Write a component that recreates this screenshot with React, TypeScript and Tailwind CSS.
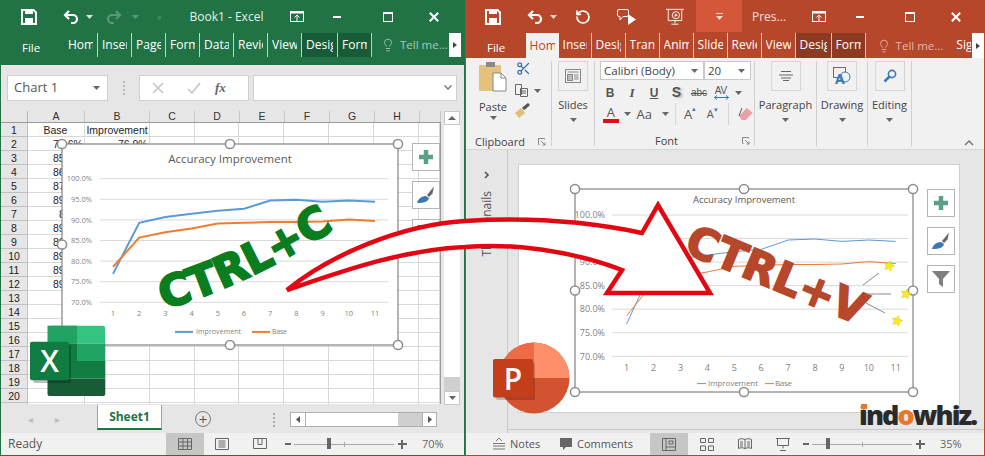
import { Lightbulb, RotateCcw, Scissors } from "lucide-react";

const improvement = [76.9, 89.3, 90.7, 91.5, 92.2, 92.7, 94.7, 94.9, 94.4, 94.7, 94.4];
const base = [78.6, 85.7, 87, 87.9, 89.1, 89.3, 89.5, 89.5, 89.6, 90.1, 89.7];

const excelCols = [
  "w-[57px]",
  "w-[65px]",
  "w-[45px]",
  "w-[45px]",
  "w-[45px]",
  "w-[45px]",
  "w-[45px]",
  "w-[45px]",
  "w-[21px]",
];

const Caret = ({ color = "#666" }: { color?: string }) => (
  <svg width="7" height="4" viewBox="0 0 7 4" className="shrink-0">
    <polygon points="0,0 7,0 3.5,4" fill={color} />
  </svg>
);

const SaveIcon = () => (
  <svg width="16" height="16" viewBox="0 0 16 16">
    <path d="M1 1h11.5L15 3.5V15H1z" fill="none" stroke="#fff" strokeWidth="2" />
    <rect x="4" y="1" width="8" height="4" fill="#fff" />
    <rect x="4" y="9" width="8" height="6" fill="#fff" />
  </svg>
);

const UndoIcon = ({ color = "#fff", flip = false }: { color?: string; flip?: boolean }) => (
  <svg width="16" height="14" viewBox="0 0 16 14" className={flip ? "-scale-x-100" : ""}>
    <path d="M6 1L2 5l4 4M2.5 5H10a3.5 3.5 0 0 1 0 8H8" fill="none" stroke={color} strokeWidth="2.2" />
  </svg>
);

const DisplayIcon = () => (
  <svg width="14" height="12" viewBox="0 0 14 12">
    <rect x="0.5" y="0.5" width="13" height="10" fill="none" stroke="#fff" />
    <rect x="0.5" y="0.5" width="13" height="2" fill="#fff" />
    <path d="M7 10V4.5M4.5 6.5L7 4l2.5 2.5" fill="none" stroke="#fff" />
  </svg>
);

const MaxIcon = () => (
  <svg width="10" height="10" viewBox="0 0 10 10">
    <rect x="0.5" y="0.5" width="9" height="9" fill="none" stroke="#fff" />
    <rect x="0" y="0" width="10" height="2" fill="#fff" />
  </svg>
);

const CloseIcon = () => (
  <svg width="10" height="10" viewBox="0 0 10 10">
    <path d="M0.8 0.8l8.4 8.4M9.2 0.8L0.8 9.2" stroke="#fff" strokeWidth="2" />
  </svg>
);

const MinIcon = () => <div className="h-[2px] w-[8px] bg-white" />;

const RibbonTab = ({ label, className }: { label: string; className: string }) => (
  <div className={`h-full border-r border-white/70 pl-[4px] pr-[4px] leading-[23px] ${className}`}>
    <div className="overflow-hidden whitespace-nowrap">{label}</div>
  </div>
);

const ExcelHeader = () => (
  <div className="flex h-[65px] flex-col bg-[#217346] text-[12px] text-white">
    <div className="flex h-[33px] items-center">
      <div className="ml-[20px] flex w-[16px] justify-center"><SaveIcon /></div>
      <div className="ml-[26px] flex w-[16px] justify-center"><UndoIcon /></div>
      <div className="ml-[7px]"><Caret color="#d6e6dc" /></div>
      <div className="ml-[13px]"><UndoIcon color="#5a9a76" flip /></div>
      <div className="ml-[10px]"><Caret color="#5a9a76" /></div>
      <div className="ml-[18px] text-[9px] text-[#5a9a76]">»</div>
      <div className="ml-[25px] w-[80px] text-center text-[12px] text-[#e6f0ea]">Book1 - Excel</div>
      <div className="ml-[24px]"><DisplayIcon /></div>
      <div className="ml-[29px]"><MinIcon /></div>
      <div className="ml-[42px]"><MaxIcon /></div>
      <div className="ml-[36px]"><CloseIcon /></div>
    </div>
    <div className="flex h-[24px] items-stretch">
      <div className="w-[63px] pl-[21px] pt-[3px] text-[11.5px] leading-[23px]">File</div>
      <RibbonTab label="Home" className="w-[34px]" />
      <RibbonTab label="Insert" className="w-[34px]" />
      <RibbonTab label="Page Layout" className="w-[34px]" />
      <RibbonTab label="Formulas" className="w-[34px]" />
      <RibbonTab label="Data" className="w-[34px]" />
      <RibbonTab label="Review" className="w-[34px]" />
      <RibbonTab label="View" className="w-[34px]" />
      <RibbonTab label="Design" className="w-[36px] bg-[#185c37]" />
      <RibbonTab label="Format" className="w-[34px] bg-[#185c37]" />
      <div className="ml-[9px] flex items-center text-[11.5px] text-[#a9c9b6]">
        <Lightbulb size={14} strokeWidth={1.5} />
        <span className="ml-[5px] whitespace-nowrap">Tell me...</span>
      </div>
      <div className="ml-auto mr-[3px] flex w-[12px] items-center justify-center bg-white">
        <svg width="4" height="6" viewBox="0 0 4 6"><polygon points="0,0 4,3 0,6" fill="#444" /></svg>
      </div>
    </div>
  </div>
);

const FormulaBar = () => (
  <div className="flex h-[47px] items-center bg-[#e6e6e6] pl-[6px] pr-[7px]">
    <div className="flex h-[26px] w-[101px] items-center justify-between border border-[#d0d0d0] bg-white pl-[6px] pr-[7px] text-[13px] text-[#555]">
      Chart 1
      <Caret />
    </div>
    <div className="ml-[15px] flex w-[2px] flex-col gap-[2px]">
      <div className="h-[2px] bg-[#bbb]" />
      <div className="h-[2px] bg-[#bbb]" />
      <div className="h-[2px] bg-[#bbb]" />
      <div className="h-[2px] bg-[#bbb]" />
    </div>
    <div className="ml-[14px] flex h-[26px] w-[110px] items-center border border-[#d0d0d0] bg-white">
      <svg width="12" height="12" viewBox="0 0 12 12" className="ml-[12px]">
        <path d="M1 1l10 10M11 1L1 11" stroke="#c4c4c4" strokeWidth="1.5" />
      </svg>
      <svg width="14" height="12" viewBox="0 0 14 12" className="ml-[23px]">
        <path d="M1 7l4 4 8-10" fill="none" stroke="#c4c4c4" strokeWidth="1.5" />
      </svg>
      <span className="ml-[14px] font-['Liberation_Serif',serif] text-[13px] font-bold italic text-[#666]">fx</span>
    </div>
    <div className="ml-[4px] flex h-[26px] flex-1 items-center justify-end border border-[#d0d0d0] bg-white pr-[4px]">
      <svg width="8" height="5" viewBox="0 0 8 5"><path d="M0.5 0.5l3.5 3.5 3.5-3.5" fill="none" stroke="#777" strokeWidth="1.5" /></svg>
    </div>
  </div>
);

const cellValues: Record<number, [string, string]> = {
  1: ["Base", "Improvement"],
  2: ["78.6%", "76.9%"],
  3: ["85.7%", "89.3%"],
  4: ["86.9%", "90.7%"],
  5: ["87.9%", "91.5%"],
  6: ["89.1%", "92.2%"],
  7: ["8.3%", "92.7%"],
  8: ["89.5%", "94.7%"],
  9: ["89.5%", "94.9%"],
  10: ["89.6%", "94.4%"],
  11: ["89.1%", "94.7%"],
  12: ["89.7%", "94.4%"],
};

const SheetGrid = () => {
  const rows = Array.from({ length: 21 }, (_, i) => i + 1);
  return (
    <div className="w-[440px] overflow-hidden font-['Liberation_Sans',sans-serif] text-[10.5px] text-[#222]">
      <div className="flex h-[11px] bg-[#e6e6e6] leading-[10px] text-[#333]">
        <div className="w-[27px] border-r border-[#b8b8b8]" />
        {["A", "B", "C", "D", "E", "F", "G", "H", ""].map((c, i) => (
          <div key={i} className={`${excelCols[i]} border-r border-[#c8c8c8] text-center`}>{c}</div>
        ))}
      </div>
      <div className="h-[282px] overflow-hidden border-r border-t border-[#9a9a9a] bg-white">
        {rows.map((r) => (
          <div key={r} className="flex h-[14px] leading-[15px]">
            <div className="w-[27px] overflow-hidden border-b border-r border-[#c0c0c0] bg-[#e6e6e6] text-center">{r <= 20 ? r : ""}</div>
            {excelCols.map((w, i) => {
              const v = cellValues[r]?.[i];
              return (
                <div
                  key={i}
                  className={`${w} overflow-hidden whitespace-nowrap border-b border-r border-[#d8d8d8] pr-[1px] ${r === 1 && i === 0 ? "text-center" : "text-right"}`}
                >
                  {v}
                </div>
              );
            })}
          </div>
        ))}
      </div>
    </div>
  );
};

const VerticalScroll = () => (
  <div className="ml-[3px] flex h-[294px] w-[16px] flex-col bg-[#cfcfcf]">
    <div className="flex h-[14px] items-center justify-center border border-[#c8c8c8] bg-white">
      <svg width="8" height="4" viewBox="0 0 8 4"><polygon points="0,4 8,4 4,0" fill="#666" /></svg>
    </div>
    <div className="h-[252px] bg-white" />
    <div className="flex-1" />
    <div className="flex h-[14px] items-center justify-center border border-[#c8c8c8] bg-white">
      <Caret />
    </div>
  </div>
);

const SheetTabs = () => (
  <div className="flex h-[28px] items-start bg-[#e6e6e6]">
    <div className="ml-[27px] mt-[8px] text-[10px] leading-[12px] text-[#bdbdbd]">◂</div>
    <div className="ml-[22px] mt-[8px] text-[10px] leading-[12px] text-[#bdbdbd]">▸</div>
    <div className="ml-[37px] flex h-[25px] w-[65px] items-center justify-center border-b-2 border-x border-x-[#a0a0a0] border-b-[#217346] bg-white text-[12px] font-bold text-[#217346]">
      Sheet1
    </div>
    <div className="ml-[33px] mt-[6px] flex h-[16px] w-[16px] items-center justify-center rounded-full border border-[#777] text-[15px] leading-[14px] text-[#555]">+</div>
    <div className="ml-[62px] mt-[8px] flex w-[2px] flex-col gap-[2px]">
      <div className="h-[2px] bg-[#aaa]" />
      <div className="h-[2px] bg-[#aaa]" />
      <div className="h-[2px] bg-[#aaa]" />
      <div className="h-[2px] bg-[#aaa]" />
    </div>
    <div className="ml-[15px] mt-[7px] flex h-[15px] w-[147px] border border-[#b0b0b0] bg-[#cfcfcf]">
      <div className="flex w-[15px] items-center justify-center border-r border-[#b0b0b0] bg-white">
        <svg width="4" height="7" viewBox="0 0 4 7"><polygon points="4,0 0,3.5 4,7" fill="#555" /></svg>
      </div>
      <div className="w-[92px] bg-white" />
      <div className="flex-1" />
      <div className="flex w-[14px] items-center justify-center border-l border-[#b0b0b0] bg-white">
        <svg width="4" height="7" viewBox="0 0 4 7"><polygon points="0,0 4,3.5 0,7" fill="#555" /></svg>
      </div>
    </div>
  </div>
);

const ZoomSlider = ({ percent, thumb }: { percent: string; thumb: string }) => (
  <div className="flex items-center text-[#666]">
    <div className="h-[2px] w-[6px] bg-[#666]" />
    <div className="relative ml-[3px] h-[1px] w-[100px] bg-[#a8a8a8]">
      <div className={`absolute top-[-6px] h-[11px] w-[4px] bg-[#666] ${thumb}`} />
      <div className="absolute left-[50px] top-[-2px] h-[5px] w-[1px] bg-[#a8a8a8]" />
    </div>
    <div className="relative ml-[4px] h-[9px] w-[9px]">
      <div className="absolute left-0 top-[3px] h-[2px] w-[9px] bg-[#666]" />
      <div className="absolute left-[3px] top-0 h-[9px] w-[2px] bg-[#666]" />
    </div>
    <div className="ml-[15px] text-[11px]">{percent}</div>
  </div>
);

const NormalView = () => (
  <svg width="14" height="12" viewBox="0 0 14 12" fill="none" stroke="#666">
    <path d="M.5.5h13v11H.5zM5 .5v11M9.5.5v11M.5 4h13M.5 8h13" />
  </svg>
);

const ExcelStatus = () => (
  <div className="flex h-[22px] items-center bg-[#f1f1f1] text-[12px] text-[#555]">
    <div className="w-[165px] pl-[7px]">Ready</div>
    <div className="flex h-full w-[38px] items-center justify-center bg-[#c6c6c6]"><NormalView /></div>
    <svg width="14" height="12" viewBox="0 0 14 12" fill="none" stroke="#666" className="ml-[11px]">
      <path d="M.5.5h13v11H.5zM3.500 3h7M3.500 5h7M3.500 7h7M3.500 9h7" />
    </svg>
    <svg width="14" height="12" viewBox="0 0 14 12" fill="none" stroke="#666" className="ml-[24px]">
      <path d="M.5.5h13v10H.5zM5 .5v6h4v-6" />
    </svg>
    <div className="ml-[18px]"><ZoomSlider percent="70%" thumb="left-[33px]" /></div>
  </div>
);

const ExcelPane = () => (
  <div className="flex w-[465px] flex-col border-x border-b border-[#217346]">
    <ExcelHeader />
    <FormulaBar />
    <div className="flex bg-[#e6e6e6]">
      <SheetGrid />
      <VerticalScroll />
      <div className="flex-1" />
    </div>
    <SheetTabs />
    <ExcelStatus />
  </div>
);

const PptHeader = () => (
  <div className="flex h-[58px] flex-col bg-[#b7472a] text-[12px] text-white">
    <div className="flex h-[33px] items-center">
      <div className="ml-[19px]"><SaveIcon /></div>
      <div className="ml-[26px]"><UndoIcon /></div>
      <div className="ml-[7px]"><Caret color="#f3d9d0" /></div>
      <RotateCcw size={16} strokeWidth={2.6} className="ml-[18px]" />
      <svg width="20" height="18" viewBox="0 0 20 18" className="ml-[26px]">
        <path d="M2 1.500h8a1.500 1.500 0 0 1 1.500 1.500v4a1.500 1.500 0 0 1-1.500 1.500H6L3 12V8.500H2A1.500 1.500 0 0 1 .5 7V3A1.500 1.500 0 0 1 2 1.500z" fill="none" stroke="#fff" />
        <polygon points="11,6 19,11.500 11,17" fill="#fff" />
      </svg>
      <svg width="18" height="18" viewBox="0 0 20 20" fill="none" stroke="#fff" className="ml-[29px]">
        <path d="M0 1.500h20M2.500 1.500V14h15V1.500M10 14v3M6 18h8" />
        <circle cx="11" cy="8" r="4" />
        <polygon points="9.800,6 13,8 9.800,10" fill="#fff" stroke="none" />
      </svg>
      <div className="ml-[12px] flex h-[32px] w-[46px] items-center justify-center self-start bg-[#d4573a]">
        <svg width="7" height="7" viewBox="0 0 7 7" fill="#f3d9d0">
          <rect width="7" height="1" />
          <polygon points="0,3 7,3 3.500,7" />
        </svg>
      </div>
      <div className="ml-[10px] w-[36px] text-[12px] text-[#f3e0da]">Pres...</div>
      <div className="ml-[24px]"><DisplayIcon /></div>
      <div className="ml-[30px]"><MinIcon /></div>
      <div className="ml-[41px]"><MaxIcon /></div>
      <div className="ml-[36px]"><CloseIcon /></div>
    </div>
    <div className="flex h-[25px] items-stretch">
      <div className="w-[63px] pl-[21px] pt-[3px] text-[11.5px] leading-[23px]">File</div>
      <div className="w-[33px] bg-[#f1f1f1] pl-[4px] pr-[4px] pt-[1px] leading-[23px] text-[#b7472a]">
        <div className="overflow-hidden whitespace-nowrap">Home</div>
      </div>
      <RibbonTab label="Insert" className="w-[33px]" />
      <RibbonTab label="Design" className="w-[34px]" />
      <RibbonTab label="Transitions" className="w-[34px]" />
      <RibbonTab label="Animations" className="w-[34px]" />
      <RibbonTab label="Slide Show" className="w-[34px]" />
      <RibbonTab label="Review" className="w-[34px]" />
      <RibbonTab label="View" className="w-[34px]" />
      <RibbonTab label="Design" className="w-[36px] bg-[#8e3a22]" />
      <RibbonTab label="Format" className="w-[34px] bg-[#8e3a22]" />
      <div className="ml-[11px] flex items-center text-[11.5px] text-[#e3b8aa]">
        <Lightbulb size={14} strokeWidth={1.5} />
        <span className="ml-[5px] whitespace-nowrap">Tell me...</span>
      </div>
      <div className="ml-[13px] w-[16px] overflow-hidden whitespace-nowrap leading-[23px]">Sign in</div>
      <div className="ml-[1px] flex w-[13px] items-center justify-center bg-white">
        <svg width="4" height="6" viewBox="0 0 4 6"><polygon points="0,0 4,3 0,6" fill="#444" /></svg>
      </div>
    </div>
  </div>
);

const GroupBox = ({ label, children, className }: { label: string; children: React.ReactNode; className: string }) => (
  <div className={`my-[3px] flex flex-col items-center border-r border-[#d0d0d0] ${className}`}>
    <div className="flex h-[30px] w-[30px] items-center justify-center border border-[#d4d4d4]">{children}</div>
    <div className="mt-[6px] whitespace-nowrap leading-[16px]">{label}</div>
    <div className="mt-[5px]"><Caret /></div>
  </div>
);

const Launcher = () => (
  <svg width="8" height="8" viewBox="0 0 8 8" fill="none" stroke="#888">
    <path d="M.5 .5h6v1M.5.500v6h1M3 3l4 4M7 4.500V7H4.500" />
  </svg>
);

const FontGroup = () => (
  <div className="my-[3px] flex w-[160px] flex-col border-r border-[#d0d0d0]">
    <div className="ml-[5px] flex h-[23px] w-[151px] border border-[#c8c8c8] bg-white text-[11.5px]">
      <div className="flex w-[104px] items-center justify-between border-r-2 border-[#c8c8c8] pl-[3px] pr-[5px]">
        Calibri (Body)
        <Caret />
      </div>
      <div className="flex flex-1 items-center justify-between pl-[3px] pr-[5px]">
        20
        <Caret />
      </div>
    </div>
    <div className="ml-[4px] mt-[2px] flex h-[22px] items-center font-['Liberation_Sans',sans-serif] text-[#555]">
      <div className="w-[22px] text-center text-[12px] font-bold">B</div>
      <div className="w-[22px] text-center font-['Liberation_Serif',serif] text-[13px] font-bold italic">I</div>
      <div className="w-[22px] text-center text-[12px] font-bold underline">U</div>
      <div className="w-[23px] text-center text-[14px] font-bold [text-shadow:2px_1px_2px_#bbb]">S</div>
      <div className="w-[22px] text-center text-[10px] line-through">abc</div>
      <div className="flex w-[22px] flex-col items-center text-[10px] leading-[9px]">
        AV
        <svg width="15" height="5" viewBox="0 0 15 5"><path d="M0 2.500h15M3 .5L.5 2.500 3 4.500M12 .5l2.500 2L12 4.500" fill="none" stroke="#3c78b4" /></svg>
      </div>
      <div className="ml-[3px]"><Caret /></div>
    </div>
    <div className="ml-[5px] flex h-[22px] items-center text-[#555]">
      <div className="flex w-[22px] flex-col items-center text-[13px] leading-[13px]">
        A
        <div className="h-[4px] w-[16px] bg-[#e01010]" />
      </div>
      <div className="ml-[2px]"><Caret /></div>
      <div className="ml-[6px] w-[24px] text-[13px]">Aa</div>
      <div className="ml-[2px]"><Caret /></div>
      <div className="ml-[6px] h-[22px] w-px bg-[#d4d4d4]" />
      <div className="ml-[8px] flex w-[16px] text-[13px]">A<span className="text-[7px] leading-[8px] text-[#3c78b4]">▴</span></div>
      <div className="ml-[7px] flex w-[16px] text-[11px]">A<span className="text-[7px] leading-[8px] text-[#3c78b4]">▾</span></div>
      <div className="ml-[6px] h-[22px] w-px bg-[#d4d4d4]" />
      <svg width="16" height="14" viewBox="0 0 16 14" className="ml-[9px]">
        <polygon points="1,9 9,1 15,6 8,13 4,13" fill="#e9a0a8" />
        <path d="M1 9 L4 1" stroke="#555" />
      </svg>
    </div>
    <div className="mt-[9px] flex flex-1 items-center pl-[60px] pr-[4px] leading-[14px]">
      Font
      <div className="ml-auto"><Launcher /></div>
    </div>
  </div>
);

const Ribbon = () => (
  <div className="relative flex h-[92px] border-b border-[#d6d6d6] bg-[#f1f1f1] text-[11px] text-[#444]">
    <div className="my-[3px] flex w-[86px] flex-col border-r border-[#d0d0d0]">
      <div className="flex h-[67px] shrink-0">
        <div className="ml-[12px] flex w-[30px] flex-col items-center">
          <svg width="30" height="30" viewBox="0 0 30 30" className="mt-[1px]">
            <rect x="1" y="3" width="22" height="26" rx="1" fill="#e4c17c" />
            <rect x="8" y="0" width="9" height="5" fill="#8a8a8a" />
            <path d="M15 11h8l5 5v13H15z" fill="#fff" stroke="#888" />
            <path d="M23 11v5h5" fill="none" stroke="#888" />
          </svg>
          <div className="mt-[7px] leading-[15px]">Paste</div>
          <div className="mt-[2px]"><Caret /></div>
        </div>
        <div className="ml-[6px] flex flex-col items-start">
          <Scissors size={15} className="ml-[2px] text-[#3a6ea5]" />
          <div className="mt-[7px] flex items-center">
            <svg width="15" height="15" viewBox="0 0 15 15" fill="#f1f1f1" stroke="#666">
              <path d="M1.500 1.500h6v10h-6zM6.500 5.500h7v8h-7zM8 8h4M8 10h4" />
            </svg>
            <div className="ml-[5px]"><Caret /></div>
          </div>
          <svg width="17" height="15" viewBox="0 0 17 15" className="mt-[5px]">
            <polygon points="1,10 7,5 11,10 5,15" fill="#e0bd78" />
            <path d="M9 6l6-5" stroke="#555" strokeWidth="3" />
          </svg>
        </div>
      </div>
      <div className="mt-[7px] flex items-center pl-[9px] pr-[5px] leading-[14px]">
        Clipboard
        <div className="ml-auto"><Launcher /></div>
      </div>
    </div>
    <GroupBox label="Slides" className="w-[43px]">
      <svg width="16" height="14" viewBox="0 0 16 14" fill="none" stroke="#888">
        <rect x="0.5" y="0.5" width="15" height="13" />
        <path d="M2.500 3h11" />
        <rect x="2.500" y="5.500" width="5" height="6" fill="#bbb" />
        <path d="M9 6h4.500M9 8h4.500M9 10h4.500" />
      </svg>
    </GroupBox>
    <FontGroup />
    <GroupBox label="Paragraph" className="w-[62px]">
      <svg width="14" height="10" viewBox="0 0 14 10" stroke="#666">
        <path d="M2 .5h10M0 4h14M2 7h10M4 9.500h6" />
      </svg>
    </GroupBox>
    <GroupBox label="Drawing" className="w-[51px]">
      <svg width="20" height="20" viewBox="0 0 20 20" fill="none" stroke="#3c78b4">
        <rect x="1.500" y="1.500" width="12" height="10" />
        <circle cx="13" cy="11" r="5" fill="#f1f1f1" />
        <text x="3" y="18" fontSize="14" fontWeight="700" fill="#3c78b4" stroke="none">A</text>
      </svg>
    </GroupBox>
    <GroupBox label="Editing" className="w-[44px]">
      <svg width="14" height="14" viewBox="0 0 14 14" fill="none" stroke="#3c78b4" strokeWidth="1.6">
        <circle cx="9" cy="5" r="3.600" />
        <path d="M6.500 7.500L1.500 12.500" strokeWidth="2.5" />
      </svg>
    </GroupBox>
    <svg width="10" height="6" viewBox="0 0 10 6" className="absolute right-[10px] top-[82px]">
      <path d="M1 5l4-4 4 4" fill="none" stroke="#777" strokeWidth="1.5" />
    </svg>
  </div>
);

const Editor = () => (
  <div className="flex h-[283px] bg-[#e6e6e6]">
    <div className="flex w-[42px] flex-col items-center border-r border-[#c8c8c8]">
      <svg width="6" height="8" viewBox="0 0 6 8" className="mt-[21px]">
        <path d="M1 1l3 3-3 3" fill="none" stroke="#555" strokeWidth="1.6" />
      </svg>
      <div className="mt-[12px] rotate-180 text-[12px] text-[#555] [writing-mode:vertical-rl]">Thumbnails</div>
    </div>
    <div className="flex-1 pb-[3px]">
      <div className="h-full border-b border-[#c8c8c8] pl-[10px] pt-[14px]">
        <div className="h-[249px] w-[442px] border border-[#cfcfcf] bg-white" />
      </div>
    </div>
  </div>
);

const PptStatus = () => (
  <div className="flex h-[22px] items-center bg-[#f1f1f1] text-[11px] text-[#555]">
    <svg width="12" height="12" viewBox="0 0 12 12" stroke="#777" className="ml-[27px]">
      <path d="M0 5.500h12M0 8h12M0 11h12M3 3l3-3 3 3" fill="none" />
    </svg>
    <div className="ml-[5px] w-[29px]">Notes</div>
    <svg width="13" height="13" viewBox="0 0 13 13" className="ml-[21px]">
      <path d="M0 0h12v9H6l-3 3V9H0z" fill="#666" />
    </svg>
    <div className="ml-[4px] w-[61px]">Comments</div>
    <div className="ml-[12px] flex h-full w-[38px] items-center justify-center bg-[#c6c6c6]">
      <svg width="14" height="13" viewBox="0 0 14 13" fill="none" stroke="#666">
        <path d="M.5.500h13v12H.5zM4 .5v12M4 9h9.500M7 3h4v3H7z" />
      </svg>
    </div>
    <svg width="14" height="13" viewBox="0 0 14 13" fill="none" stroke="#666" className="ml-[12px]">
      <path d="M.5.500h5v4h-5zM8.500.5h5v4h-5zM.5 8h5v4.500h-5zM8.500 8h5v4.500h-5z" />
    </svg>
    <svg width="14" height="13" viewBox="0 0 14 13" fill="none" stroke="#666" className="ml-[24px]">
      <path d="M.5 1.500c2-1 4-1 6.500 0 2.500-1 4.500-1 6.500 0v9c-2-1-4-1-6.500 0-2.500-1-4.500-1-6.500 0zM7 1.500v9M2 4h3M2 6h3M2 8h3M9 4h3M9 6h3M9 8h3" />
    </svg>
    <svg width="14" height="13" viewBox="0 0 14 13" fill="none" stroke="#666" className="ml-[24px]">
      <path d="M0 .5h14M1.500 .5v7h11v-7M7 7.500v3M4 12.500h6" />
    </svg>
    <div className="ml-[13px]"><ZoomSlider percent="35%" thumb="left-[14px]" /></div>
  </div>
);

const PptPane = () => (
  <div className="flex w-[520px] flex-col border-x border-b border-[#b7472a]">
    <PptHeader />
    <Ribbon />
    <Editor />
    <PptStatus />
  </div>
);

type ChartProps = {
  className: string;
  box: [number, number, number, number];
  gridX: [number, number];
  y100: number;
  y70: number;
  firstX: number;
  stepX: number;
  labelX: number;
  tickY: number;
  titleY: number;
  titleSize: number;
  axisSize: number;
  lineWidth: number;
  legendY: number;
  legend: [number, number, number, number, number, number];
  legendSize: number;
  legendWidths: [number, number];
};

const Chart = ({ className, box, gridX, y100, y70, firstX, stepX, labelX, tickY, titleY, titleSize, axisSize, lineWidth, legendY, legend, legendSize, legendWidths }: ChartProps) => {
  const [l, t, r, b] = box;
  const yOf = (v: number) => y100 + ((100 - v) * (y70 - y100)) / 30;
  const xOf = (i: number) => firstX + i * stepX;
  const pts = (data: number[]) => data.map((v, i) => `${xOf(i).toFixed(1)},${yOf(v).toFixed(1)}`).join(" ");
  const midX = (l + r) / 2;
  const midY = (t + b) / 2;
  const ticks = [100, 95, 90, 85, 80, 75, 70];
  const handles = [[l, t], [midX, t], [r, t], [l, midY], [r, midY], [l, b], [midX, b], [r, b]];
  return (
    <svg className={`absolute overflow-visible ${className}`} viewBox={`${l} ${t} ${r - l} ${b - t}`}>
      <rect x={l} y={t} width={r - l} height={b - t} fill="#fff" stroke="#8c8c8c" strokeWidth="1.3" />
      <text x={midX} y={titleY} textAnchor="middle" fontSize={titleSize} fill="#595959" fontFamily="'Open Sans', sans-serif">
        Accuracy Improvement
      </text>
      {ticks.map((v) => (
        <g key={v}>
          <line x1={gridX[0]} x2={gridX[1]} y1={yOf(v)} y2={yOf(v)} stroke="#d9d9d9" />
          <text x={labelX} y={yOf(v) + axisSize * 0.36} textAnchor="end" fontSize={axisSize} fill="#7f7f7f" fontFamily="'Open Sans', sans-serif">
            {v.toFixed(1)}%
          </text>
        </g>
      ))}
      {improvement.map((_, i) => (
        <text key={i} x={xOf(i)} y={tickY} textAnchor="middle" fontSize={axisSize} fill="#7f7f7f" fontFamily="'Open Sans', sans-serif">
          {i + 1}
        </text>
      ))}
      <polyline points={pts(improvement)} fill="none" stroke="#5b9bd5" strokeWidth={lineWidth} />
      <polyline points={pts(base)} fill="none" stroke="#ed7d31" strokeWidth={lineWidth} />
      <line x1={legend[0]} x2={legend[1]} y1={legendY - legendSize * 0.3} y2={legendY - legendSize * 0.3} stroke="#5b9bd5" strokeWidth={lineWidth} />
      <text x={legend[2]} y={legendY} fontSize={legendSize} fill="#7f7f7f" textLength={legendWidths[0]} fontFamily="'Open Sans', sans-serif">Improvement</text>
      <line x1={legend[3]} x2={legend[4]} y1={legendY - legendSize * 0.3} y2={legendY - legendSize * 0.3} stroke="#ed7d31" strokeWidth={lineWidth} />
      <text x={legend[5]} y={legendY} fontSize={legendSize} fill="#7f7f7f" textLength={legendWidths[1]} fontFamily="'Open Sans', sans-serif">Base</text>
      {handles.map(([x, y], i) => (
        <circle key={i} cx={x} cy={y} r="4.6" fill="#fff" stroke="#8c8c8c" strokeWidth="1.5" />
      ))}
    </svg>
  );
};

const SideButton = ({ className, kind }: { className: string; kind: "plus" | "brush" | "filter" }) => (
  <div className={`absolute flex h-[28px] w-[28px] items-center justify-center border border-[#b4b4b4] bg-white ${className}`}>
    {kind === "plus" && (
      <svg width="16" height="16" viewBox="0 0 16 16"><path d="M8 1v14M1 8h14" stroke="#5b9e8a" strokeWidth="4.5" /></svg>
    )}
    {kind === "brush" && (
      <svg width="20" height="20" viewBox="0 0 20 20">
        <path d="M11 10l7-8.500-1.500 7-3.500 3.500z" fill="#666" />
        <path d="M1 18c1-3.500 3-6.500 9-7l3 2c-.5 3-4 5-12 5z" fill="#3c78b4" />
      </svg>
    )}
    {kind === "filter" && (
      <svg width="18" height="18" viewBox="0 0 18 18">
        <polygon points="0,1 18,1 11,9 11,17 7,14 7,9" fill="#7f7f7f" />
      </svg>
    )}
  </div>
);

const star = (cx: number, cy: number) => {
  const points: string[] = [];
  for (let i = 0; i < 10; i++) {
    const rad = i % 2 === 0 ? 5.5 : 2.6;
    const a = -Math.PI / 2 + 0.25 + (i * Math.PI) / 5;
    points.push(`${(cx + rad * Math.cos(a)).toFixed(1)},${(cy + rad * Math.sin(a)).toFixed(1)}`);
  }
  return points.join(" ");
};

const Overlay = () => (
  <svg className="pointer-events-none absolute left-0 top-0 h-[456px] w-[985px]" viewBox="0 0 985 456">
    <defs>
      <path id="ctrlc" d="M164 309 Q 250 285 342 224" />
      <path id="ctrlv" d="M683 252 Q 770 288 868 329" />
    </defs>
    {/* excel logo */}
    <path d="M51 325.700h52a2 2 0 0 1 2 2V343H77z" fill="#33c481" />
    <rect x="47.500" y="325.700" width="29.500" height="17.600" fill="#21a366" />
    <rect x="47.500" y="343.300" width="29.500" height="17.700" fill="#107c41" />
    <rect x="77" y="343.300" width="28.300" height="17.700" fill="#21a366" />
    <rect x="47.500" y="361" width="57.800" height="17.700" fill="#107c41" />
    <path d="M47.500 378.700h57.800V394a2 2 0 0 1-2 2H49.500a2 2 0 0 1-2-2z" fill="#185c37" />
    <rect x="33" y="345" width="38" height="38" rx="2" fill="#000" opacity="0.25" />
    <rect x="30" y="341.700" width="39" height="38.500" rx="2" fill="#107c41" />
    <text x="49.500" y="372" textAnchor="middle" fontSize="30" fontWeight="600" fill="#fff" fontFamily="'Open Sans', sans-serif">X</text>
    {/* powerpoint logo */}
    <circle cx="534" cy="378" r="35.500" fill="#d35230" />
    <path d="M534 342.500a35.500 35.500 0 0 1 35.500 35.500H534z" fill="#ff8f6b" />
    <path d="M534 342.500a35.500 35.500 0 0 0-35.500 35.500H534z" fill="#ed6c47" />
    <rect x="496" y="362" width="39" height="38" rx="2" fill="#000" opacity="0.2" />
    <rect x="493" y="359" width="40" height="38.500" rx="2" fill="#c43e1c" />
    <text x="513" y="390" textAnchor="middle" fontSize="30" fontWeight="600" fill="#fff" fontFamily="'Open Sans', sans-serif">P</text>
    {/* copy arrow */}
    <path
      d="M287 290 C 330 255 400 225 465 221 C 530 217 590 222 642 233 L658 205 L710 293 L607 293 L622 270 C 570 250 510 243 465 247 C 400 250 340 272 287 290 Z"
      fill="#fff"
      stroke="#e30613"
      strokeWidth="4.5"
      strokeLinejoin="miter"
    />
    <text fontFamily="'DejaVu Sans', sans-serif" fontSize="43" fontWeight="700" fill="#0a7d1e" stroke="#0a7d1e" strokeWidth="2.2">
      <textPath href="#ctrlc">CTRL+C</textPath>
    </text>
    <text fontFamily="'DejaVu Sans', sans-serif" fontSize="43" fontWeight="700" fill="#b7472a" stroke="#b7472a" strokeWidth="1.8">
      <textPath href="#ctrlv">CTRL+V</textPath>
    </text>
    {/* sparkle */}
    <path d="M863 285l16-12M867 294h24M866 303l19 10" stroke="#8c8c8c" strokeWidth="1" fill="none" />
    <polygon points={star(889, 266)} fill="#ffe920" stroke="#c8b400" strokeWidth="0.4" />
    <polygon points={star(906, 294)} fill="#ffe920" stroke="#c8b400" strokeWidth="0.4" />
    <polygon points={star(897, 321)} fill="#ffe920" stroke="#c8b400" strokeWidth="0.4" />
  </svg>
);

const Watermark = () => (
  <div className="absolute left-[859px] top-[398px] whitespace-nowrap font-['Open_Sans',sans-serif] text-[27px] font-extrabold leading-[34px] tracking-[-1.9px] text-[#2a2a2a]">
    ind<span className="text-[#e8772e]">o</span>whiz.
    <div className="absolute left-[2px] top-[6px] h-[5px] w-[6px] bg-[#e8772e]" />
  </div>
);

export default function App() {
  return (
    <div className="relative flex h-[456px] w-[985px] overflow-hidden bg-white font-['Open_Sans',sans-serif]">
      <ExcelPane />
      <PptPane />
      <Chart
        className="left-[62px] top-[144px] h-[201px] w-[336px]"
        box={[62, 144, 398, 345]}
        gridX={[100, 388]}
        y100={178.7}
        y70={302.3}
        firstX={113}
        stepX={26.2}
        labelX={92}
        tickY={316}
        titleY={163}
        titleSize={11.5}
        axisSize={7.5}
        lineWidth={2}
        legendY={334}
        legend={[175, 193, 196, 252, 270, 272]}
        legendSize={7}
        legendWidths={[45, 15]}
      />
      <SideButton className="left-[412px] top-[143px]" kind="plus" />
      <SideButton className="left-[412px] top-[181px]" kind="brush" />
      <SideButton className="left-[412px] top-[219px]" kind="filter" />
      <Chart
        className="left-[575px] top-[189px] h-[203px] w-[338px]"
        box={[575, 189, 913, 392]}
        gridX={[612, 908]}
        y100={215}
        y70={356.3}
        firstX={626.7}
        stepX={26.9}
        labelX={605}
        tickY={371}
        titleY={203}
        titleSize={9.5}
        axisSize={9}
        lineWidth={1}
        legendY={386}
        legend={[697, 706, 708, 765, 774, 775]}
        legendSize={8}
        legendWidths={[50, 17]}
      />
      <SideButton className="left-[927px] top-[189px]" kind="plus" />
      <SideButton className="left-[927px] top-[227px]" kind="brush" />
      <SideButton className="left-[927px] top-[265px]" kind="filter" />
      <Overlay />
      <Watermark />
    </div>
  );
}
